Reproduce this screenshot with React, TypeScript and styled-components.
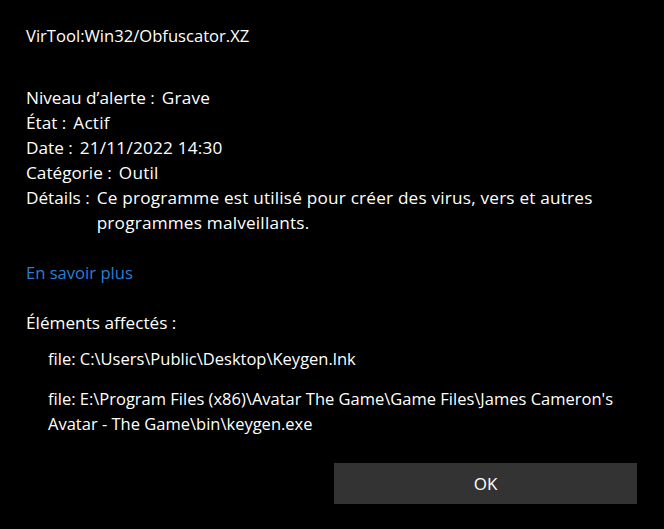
import React from "react";
import styled, { createGlobalStyle } from "styled-components";

const Global = createGlobalStyle`
  html, body { margin: 0; padding: 0; background: #000; }
  body { font-family: "Open Sans", "Noto Sans", sans-serif; color: #fff; }
`;

const Dialog = styled.div`
  width: 664px;
  height: 529px;
  box-sizing: border-box;
  background: #000;
  padding: 23px 26px 0 26px;
  display: flex;
  flex-direction: column;
  font-size: 17.2px;
  line-height: 25px;
`;

const Title = styled.h1`
  margin: 0;
  font-size: 16.6px;
  font-weight: 400;
  line-height: 25px;
`;

const Props = styled.div`
  margin-top: 37px;
  display: flex;
  flex-direction: column;
`;

const Row = styled.div`
  display: flex;
`;

const Label = styled.span`
  white-space: pre;
`;

const Value = styled.span`
  flex: 1;
  margin-left: 7px;
  letter-spacing: 0.2px;
`;

const Link = styled.a`
  margin-top: 25px;
  color: #2a7fd4;
  font-size: 16.6px;
  text-decoration: none;
  align-self: flex-start;
  cursor: pointer;
`;

const Section = styled.div`
  margin-top: 25px;
`;

const FileItem = styled.div`
  margin-left: 22px;
  margin-top: 11px;
  font-size: 16.5px;
  & + & { margin-top: 15px; }
`;

const Footer = styled.div`
  margin-top: auto;
  display: flex;
  justify-content: flex-end;
  padding: 0 1px 25px 0;
`;

const Button = styled.button`
  width: 303px;
  height: 41px;
  background: #333;
  border: none;
  color: #fff;
  font-family: inherit;
  font-size: 17px;
  padding: 0;
`;

export default function App() {
  return (
    <>
      <Global />
      <Dialog>
        <Title>VirTool:Win32/Obfuscator.XZ</Title>
        <Props>
          <Row><Label>Niveau d’alerte :</Label><Value>Grave</Value></Row>
          <Row><Label>État :</Label><Value>Actif</Value></Row>
          <Row><Label>Date :</Label><Value>21/11/2022 14:30</Value></Row>
          <Row><Label>Catégorie :</Label><Value>Outil</Value></Row>
          <Row><Label>Détails :</Label><Value>Ce programme est utilisé pour créer des virus, vers et autres programmes malveillants.</Value></Row>
        </Props>
        <Link>En savoir plus</Link>
        <Section>Éléments affectés :</Section>
        <FileItem>file: C:\Users\Public\Desktop\Keygen.lnk</FileItem>
        <FileItem>file: E:\Program Files (x86)\Avatar The Game\Game Files\James Cameron's Avatar - The Game\bin\keygen.exe</FileItem>
        <Footer><Button>OK</Button></Footer>
      </Dialog>
    </>
  );
}
